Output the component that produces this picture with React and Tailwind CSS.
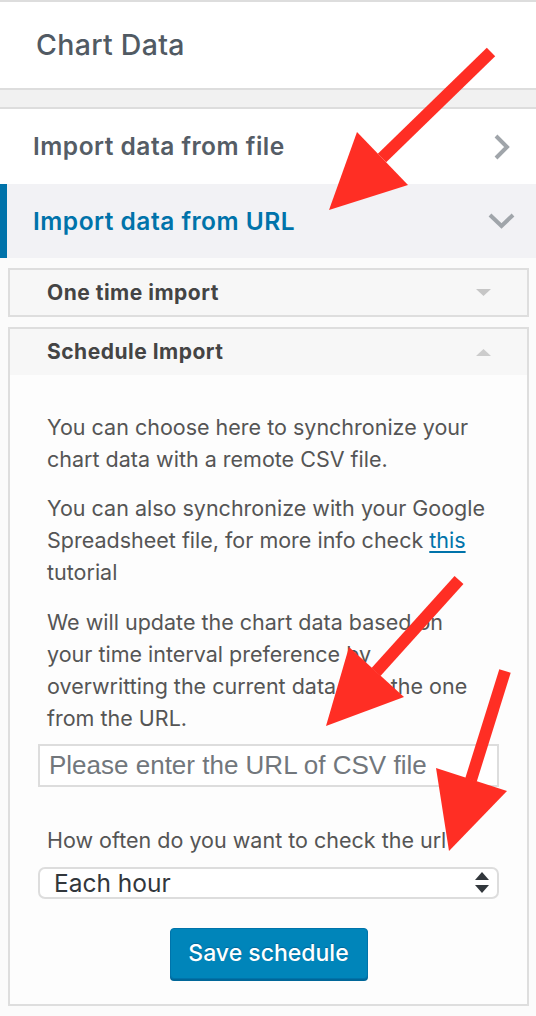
import React from "react";

function Arrow({ tail, base, head }) {
  return (
    <g fill="#ff2e24" stroke="none">
      <line x1={tail[0]} y1={tail[1]} x2={base[0]} y2={base[1]} stroke="#ff2e24" strokeWidth="12" />
      <polygon points={head.map((p) => p.join(",")).join(" ")} />
    </g>
  );
}

export default function App() {
  return (
    <div className="relative w-[536px] h-[1016px] overflow-hidden bg-[#fbfbfb] font-['Inter',sans-serif]">
      {/* Header */}
      <div className="h-[88px] border-t-2 border-[#dddddd] bg-white flex items-center pl-[36px]">
        <h2 className="text-[28.5px] font-medium text-[#515a63] tracking-[0.3px]">Chart Data</h2>
      </div>
      <div className="h-[21px] border-y-2 border-[#dddddd] bg-[#f1f1f1]" />

      {/* Row: file */}
      <div className="h-[75px] bg-white flex items-center justify-between pl-[33px] pr-[25px]">
        <span className="text-[24.5px] font-semibold tracking-[0.5px] text-[#555d66]">Import data from file</span>
        <svg width="18" height="26" viewBox="0 0 18 26">
          <polyline points="3,2 14,13 3,24" fill="none" stroke="#a0a5aa" strokeWidth="4" />
        </svg>
      </div>

      {/* Row: URL (active) */}
      <div className="h-[74px] bg-[#f2f2f5] border-l-[7px] border-[#0073aa] flex items-center justify-between pl-[26px] pr-[21px]">
        <span className="text-[24.5px] font-semibold tracking-[0.5px] text-[#0073aa]">Import data from URL</span>
        <svg width="27" height="18" viewBox="0 0 27 18">
          <polyline points="2,3 13.5,14 25,3" fill="none" stroke="#a0a5aa" strokeWidth="4" />
        </svg>
      </div>

      {/* Panels */}
      <div className="pt-[10px] pl-[8px] pr-[7px]">
        <div className="h-[49px] border-2 border-[#dedede] bg-[#f7f7f7] flex items-center justify-between pl-[37px] pr-[36px]">
          <span className="text-[21px] font-bold tracking-[0.5px] text-[#444444]">One time import</span>
          <svg width="15" height="7" viewBox="0 0 15 7">
            <polygon points="0,0 15,0 7.5,7" fill="#c6c6c6" />
          </svg>
        </div>

        <div className="mt-[10px] border-2 border-[#dedede]">
          <div className="h-[46px] bg-[#f7f7f7] flex items-center justify-between pl-[37px] pr-[36px]">
            <span className="text-[21px] font-bold tracking-[0.5px] text-[#444444]">Schedule Import</span>
            <svg width="15" height="7" viewBox="0 0 15 7">
              <polygon points="0,7 15,7 7.5,0" fill="#cccccc" />
            </svg>
          </div>
          <div className="bg-[#fdfdfd] px-[28px] pt-[36px] pb-[25px]">
            <p className="pl-[9px] text-[21.5px] leading-[32px] text-[#555555] whitespace-nowrap">
              You can choose here to synchronize your
              <br />
              chart data with a remote CSV file.
            </p>
            <p className="mt-[17px] pl-[9px] text-[21.5px] leading-[32px] text-[#555555] whitespace-nowrap">
              You can also synchronize with your Google
              <br />
              Spreadsheet file, for more info check{" "}
              <a className="text-[#0073aa] underline underline-offset-[3px]">this</a>
              <br />
              tutorial
            </p>
            <p className="mt-[18px] pl-[9px] text-[21.5px] leading-[32px] text-[#555555] whitespace-nowrap">
              We will update the chart data based on
              <br />
              your time interval preference by
              <br />
              overwritting the current data with the one
              <br />
              from the URL.
            </p>
            <div className="mt-[10px] h-[43px] border-2 border-[#dddddd] bg-white flex items-center pl-[9px]">
              <span className="text-[26px] text-[#72777c] font-['Liberation_Sans',sans-serif]">
                Please enter the URL of CSV file
              </span>
            </div>
            <p className="mt-[37px] pl-[9px] text-[21.5px] leading-[32px] text-[#555555] whitespace-nowrap">
              How often do you want to check the url
            </p>
            <div className="mt-[11px] h-[32px] border-2 border-[#dddddd] rounded-[7px] bg-white flex items-center justify-between pl-[14px] pr-[8px]">
              <span className="text-[24.5px] text-[#32373c]">Each hour</span>
              <svg width="14" height="22" viewBox="0 0 14 22">
                <polygon points="0,8 14,8 7,0" fill="#32373c" />
                <polygon points="0,13 14,13 7,21" fill="#32373c" />
              </svg>
            </div>
            <div className="mt-[29px] flex justify-center">
              <button className="h-[51px] w-[198px] rounded-[4px] bg-[#0085ba] border border-[#0073aa] shadow-[0_2px_0_#006799] text-white text-[23px] font-medium [text-shadow:0_-1px_1px_#006799]">
                Save schedule
              </button>
            </div>
          </div>
        </div>
      </div>

      {/* Annotation arrows */}
      <svg className="absolute left-0 top-0 pointer-events-none" width="536" height="1016" viewBox="0 0 536 1016">
        <Arrow tail={[491, 52]} base={[382, 158]} head={[[357, 132], [408, 185], [329, 210]]} />
        <Arrow tail={[459, 580]} base={[376, 672]} head={[[349, 647], [404, 697], [326, 726]]} />
        <Arrow tail={[505, 671]} base={[471, 780]} head={[[436, 768], [507, 791], [449, 851]]} />
      </svg>
    </div>
  );
}
